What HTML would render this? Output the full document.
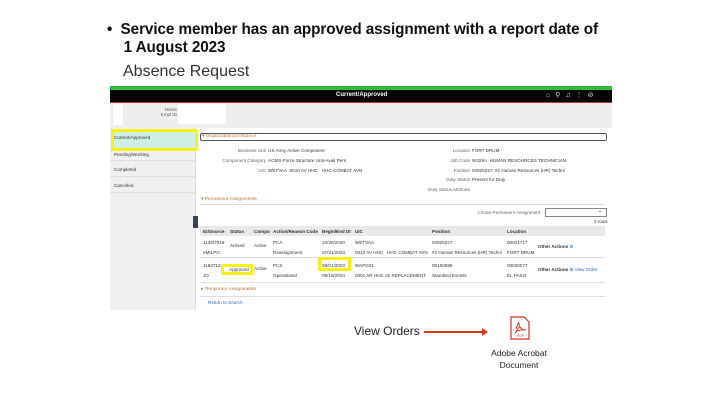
<!DOCTYPE html><html><head><style>
body{margin:0;width:720px;height:405px;background:#fff;position:relative;overflow:hidden;font-family:"Liberation Sans",Arial,sans-serif}
.a{position:absolute;white-space:nowrap}
.s{font-size:4.6px;color:#333}
.l{font-size:4.6px;color:#666;text-align:right}
</style></head><body>
<div class="a" style="left:107px;top:21px;font-size:15.3px;font-weight:bold;color:#111;line-height:18px;letter-spacing:-0.1px">•&nbsp;&nbsp;Service member has an approved assignment with a report date of<br>&nbsp;&nbsp;&nbsp;&nbsp;1 August 2023</div>
<div class="a" style="left:123px;top:63px;font-size:16px;color:#333">Absence Request</div>

<div class="a" style="left:110px;top:86px;width:502px;height:4px;background:#2fbf3a"></div>
<div class="a" style="left:110px;top:90px;width:502px;height:13px;background:#000"></div>
<div class="a" style="left:110px;top:102px;width:502px;height:1px;background:#c33"></div>
<div class="a" style="left:336px;top:92px;font-size:6px;font-weight:bold;color:#fff">Current/Approved</div>
<div class="a" style="left:546px;top:91px;font-size:7px;color:#ddd;letter-spacing:5px">⌂⚲♫⋮⊘</div>
<div class="a" style="left:110px;top:103px;width:502px;height:25px;background:#eee"></div>
<div class="a" style="left:113px;top:104px;width:10px;height:21px;background:#fff"></div>
<div class="a" style="left:178px;top:104px;width:48px;height:20px;background:#fff"></div>
<div class="a l" style="left:150px;top:107px;width:27px">Name<br>Empl ID</div>

<div class="a" style="left:110px;top:128px;width:85px;height:182px;background:#f0f0f0;border-right:1px solid #ddd"></div>
<div class="a" style="left:111px;top:129px;width:81px;height:16px;background:#cdeee0;border:3px solid #f5f01a"></div>
<div class="a s" style="left:114px;top:135px">Current/Approved</div>
<div class="a s" style="left:114px;top:152px">Pending/Working</div>
<div class="a" style="left:110px;top:160px;width:85px;height:1px;background:#ddd"></div>
<div class="a s" style="left:114px;top:167px">Completed</div>
<div class="a" style="left:110px;top:176px;width:85px;height:1px;background:#ddd"></div>
<div class="a s" style="left:114px;top:183px">Canceled</div>
<div class="a" style="left:110px;top:192px;width:85px;height:1px;background:#ddd"></div>
<div class="a" style="left:193px;top:216px;width:5px;height:12px;background:#345;"></div>

<div class="a" style="left:200px;top:133px;width:405px;height:6px;border:1px solid #555;border-radius:2px"></div>
<div class="a" style="left:202px;top:134px;font-size:4.8px;color:#b9753a">▾ Organizational Instance</div>
<div class="a l" style="left:200px;top:146px;width:66px;line-height:9.8px">Business Unit<br>Component Category<br>UIC</div>
<div class="a s" style="left:268px;top:146px;line-height:9.8px">US Army Active Component<br>ACMS-Force Structure Unit-Avail Pers<br>WETVAA&nbsp; 0010 AV HHC&nbsp;&nbsp; HHC COMBAT AVN</div>
<div class="a l" style="left:400px;top:146px;width:70px;line-height:9.8px">Location<br>Job Code<br>Position<br>Duty Status<br>Duty Status Attribute</div>
<div class="a s" style="left:472px;top:146px;line-height:9.8px">FORT DRUM<br>W429A&nbsp; HUMAN RESOURCES TECHNICIAN<br>02925227&nbsp; #2 Human Resources (HR) Techni<br>Present for Duty</div>

<div class="a" style="left:201px;top:197px;font-size:4.8px;color:#b9753a">▾ Permanent Assignments</div>
<div class="a" style="left:200px;top:204px;width:405px;height:1px;background:#ddd"></div>
<div class="a l" style="left:440px;top:210px;width:100px">Create Permanent Assignment</div>
<div class="a" style="left:545px;top:208px;width:60px;height:7px;border:1px solid #888"></div>
<div class="a" style="left:598px;top:208px;font-size:5px">⌄</div>
<div class="a s" style="left:594px;top:219px">2 rows</div>
<div class="a" style="left:200px;top:226px;width:405px;height:10px;background:#e8e8e8"></div>
<div class="a s" style="left:203px;top:229px;font-weight:bold">ID/Source</div>
<div class="a s" style="left:230px;top:229px;font-weight:bold">Status</div>
<div class="a s" style="left:254px;top:229px;font-weight:bold">Compo</div>
<div class="a s" style="left:273px;top:229px;font-weight:bold">Action/Reason Code</div>
<div class="a s" style="left:322px;top:229px;font-weight:bold">Begin/End Dt</div>
<div class="a s" style="left:355px;top:229px;font-weight:bold">UIC</div>
<div class="a s" style="left:432px;top:229px;font-weight:bold">Position</div>
<div class="a s" style="left:507px;top:229px;font-weight:bold">Location</div>

<div class="a s" style="left:203px;top:238px;line-height:9.5px">1146/7919<br>eMILPO</div>
<div class="a s" style="left:230px;top:243px">Arrived</div>
<div class="a s" style="left:254px;top:243px">Active</div>
<div class="a s" style="left:273px;top:238px;line-height:9.5px">PCA<br>Reassignment</div>
<div class="a s" style="left:322px;top:238px;line-height:9.5px">10/30/2020<br>07/31/2023</div>
<div class="a s" style="left:355px;top:238px;line-height:9.5px">WETVAA<br>0010 AV HHC&nbsp;&nbsp; HHC COMBAT AVN</div>
<div class="a s" style="left:432px;top:238px;line-height:9.5px">02925227<br>#2 Human Resources (HR) Techni</div>
<div class="a s" style="left:507px;top:238px;line-height:9.5px">00021717<br>FORT DRUM</div>
<div class="a s" style="left:538px;top:244px;font-weight:bold">Other Actions <span style="color:#36a">⊙</span></div>
<div class="a" style="left:200px;top:257px;width:405px;height:1px;background:#ddd"></div>

<div class="a s" style="left:203px;top:261px;line-height:9.5px">1150713<br>JO</div>
<div class="a s" style="left:254px;top:266px">Active</div>
<div class="a s" style="left:273px;top:261px;line-height:9.5px">PCS<br>Operational</div>
<div class="a s" style="left:322px;top:261px;line-height:9.5px">08/01/2023<br>09/18/2024</div>
<div class="a s" style="left:355px;top:261px;line-height:9.5px">WAPG01<br>0001 AR HHC 02 REPLACEMENT</div>
<div class="a s" style="left:432px;top:261px;line-height:9.5px">00160695<br>Standard Excess</div>
<div class="a s" style="left:507px;top:261px;line-height:9.5px">00040077<br>EL PASO</div>
<div class="a s" style="left:538px;top:267px;font-weight:bold">Other Actions <span style="color:#36a">⊙</span> <span style="font-weight:normal;color:#36a">View Order</span></div>
<div class="a" style="left:221px;top:264px;width:32px;height:11px;background:#fff;border:3px solid #f5f01a;box-sizing:border-box"></div>
<div class="a s" style="left:229px;top:267px">Approved</div>
<div class="a" style="left:318px;top:257px;width:33px;height:14px;border:3px solid #f5f01a;box-sizing:border-box"></div>
<div class="a" style="left:200px;top:282px;width:405px;height:1px;background:#ddd"></div>
<div class="a" style="left:201px;top:287px;font-size:4.8px;color:#b9753a">▸ Temporary Assignments</div>
<div class="a" style="left:200px;top:296px;width:405px;height:1px;background:#ddd"></div>
<div class="a" style="left:208px;top:300px;font-size:4.6px;color:#36a">Return to Search</div>

<div class="a" style="left:354px;top:324px;font-size:12px;color:#222">View Orders</div>
<div class="a" style="left:424px;top:331px;width:60px;height:2px;background:#d83a1e"></div>
<div class="a" style="left:482px;top:328px;width:0;height:0;border-left:6px solid #d83a1e;border-top:4px solid transparent;border-bottom:4px solid transparent"></div>
<svg class="a" style="left:510px;top:316px" width="20" height="24" viewBox="0 0 20 24"><path d="M1 1h13l5 5v17H1z" fill="#fff" stroke="#d0352a" stroke-width="1.2"/><path d="M6 13c2-6 3-8 3-5s3 6 6 6-7-1-9 2 1-2 3-5" fill="none" stroke="#d0352a" stroke-width="1"/><text x="7" y="21" font-size="3.5" fill="#d0352a" font-family="Liberation Sans">PDF</text></svg>
<div class="a" style="left:483px;top:347px;font-size:8.5px;color:#222;text-align:center;width:72px;line-height:12px">Adobe Acrobat<br>Document</div>
</body></html>
